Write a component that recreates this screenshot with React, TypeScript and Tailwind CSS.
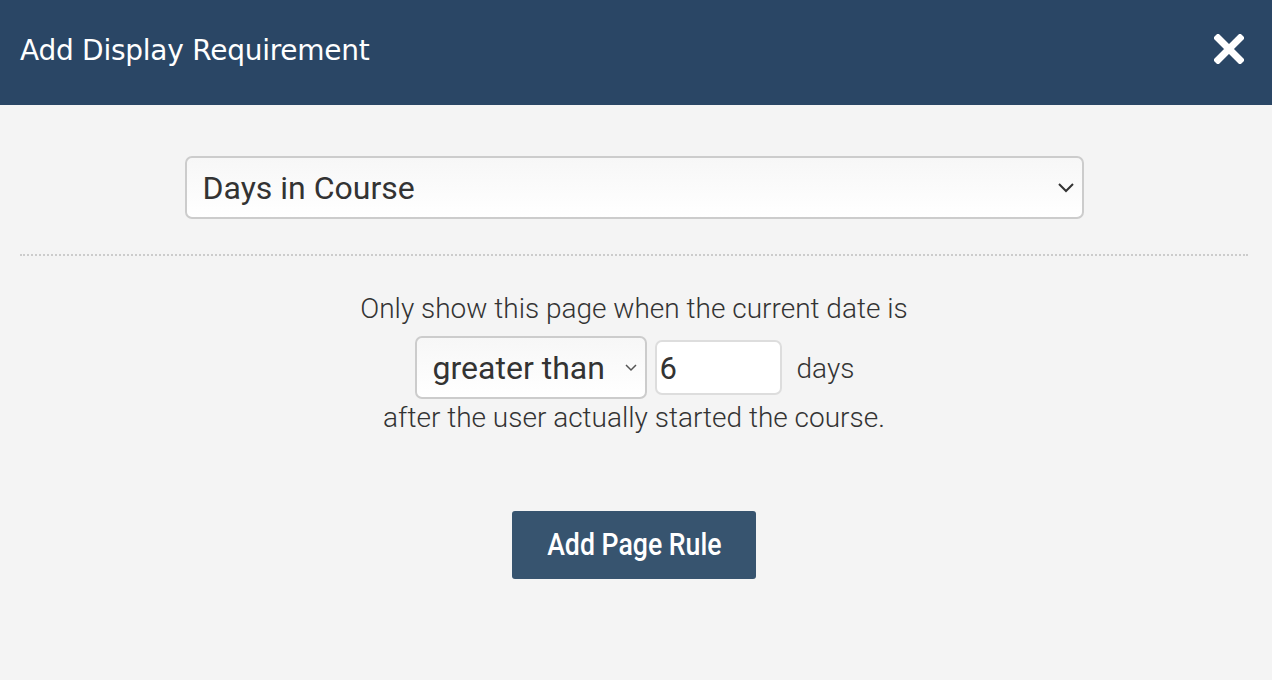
export default function App() {
  return (
    <div className="w-[1272px] h-[680px] bg-[#f4f4f4] font-['Roboto',sans-serif] text-[#333]">
      <div className="h-[105px] bg-[#2a4665] flex items-center justify-between pl-[20px] pr-[28px]">
        <h1 className="text-white text-[28px] tracking-[-0.25px] font-['DejaVu_Sans',sans-serif] leading-none -mt-[4px]">
          Add Display Requirement
        </h1>
        <svg width="30" height="30" viewBox="0 0 30 30" className="-mt-[8px]">
          <path d="M4 4 L26 26 M26 4 L4 26" stroke="white" strokeWidth="7" strokeLinecap="square" />
        </svg>
      </div>

      <div className="pl-[20px] pr-[24px]">
        <div className="flex justify-center pt-[51px]">
          <div className="w-[899px] h-[63px] border-2 border-[#cccccc] rounded-[7px] bg-gradient-to-b from-[#f7f7f7] to-white flex items-center justify-between pl-[16px] pr-[8px]">
            <span className="text-[32px]">Days in Course</span>
            <svg width="16" height="10" viewBox="0 0 16 10">
              <path d="M1 1 L8 8 L15 1" stroke="#333" strokeWidth="2" fill="none" />
            </svg>
          </div>
        </div>

        <div className="mt-[35px] border-t-2 border-dotted border-[#cccccc]" />

        <div className="flex flex-col items-center font-light text-[28px] mt-[37px]">
          <p className="leading-[32px]">Only show this page when the current date is</p>
          <div className="flex items-center gap-[8px] mt-[11px] ml-[1px]">
            <div className="w-[232px] h-[63px] border-2 border-[#cccccc] rounded-[7px] bg-gradient-to-b from-[#f7f7f7] to-white flex items-center justify-between pl-[16px] pr-[8px]">
              <span className="text-[32px] font-normal">greater than</span>
              <svg width="12" height="8" viewBox="0 0 12 8">
                <path d="M1 1 L6 6 L11 1" stroke="#555" strokeWidth="1.5" fill="none" />
              </svg>
            </div>
            <div className="w-[127px] h-[55px] border-2 border-[#dddddd] rounded-[7px] bg-white flex items-center pl-[3px] pt-[3px]">
              <span className="text-[31px] font-normal">6</span>
            </div>
            <span className="ml-[7px] pt-[3px]">days</span>
          </div>
          <p className="leading-[32px] mt-[3px]">after the user actually started the course.</p>
        </div>

        <div className="flex justify-center mt-[77px]">
          <button className="w-[244px] h-[68px] bg-[#37546f] rounded-[3px] text-white text-[31px] font-medium">
            <span className="inline-block scale-x-[0.86]">Add Page Rule</span>
          </button>
        </div>
      </div>
    </div>
  );
}
